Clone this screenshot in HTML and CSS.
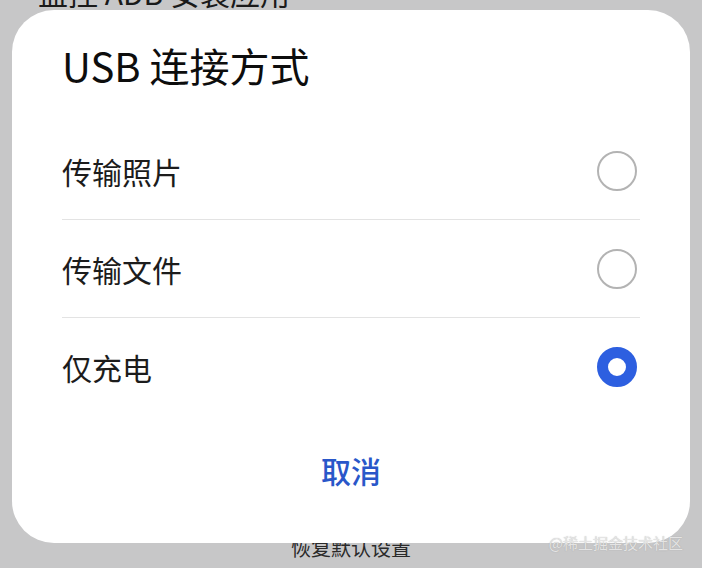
FILE: index.html
```html
<!DOCTYPE html>
<html lang="zh-CN">
<head>
  <meta charset="UTF-8" />
  <meta name="viewport" content="width=device-width, initial-scale=1.0"/>
  <title>USB 连接方式</title>
  <link rel="stylesheet" href="styles.css">
</head>
<body>

  <div class="screen">
    <div class="backdrop">
      <p class="behind-top">监控 ADB 安装应用</p>
      <p class="behind-bottom">恢复默认设置</p>
    </div>

    <div class="dialog">
      <h1 class="dialog-title">USB 连接方式</h1>

      <div class="options">
        <label class="option">
          <span class="option-text">传输照片</span>
          <span class="radio"></span>
        </label>
        <label class="option">
          <span class="option-text">传输文件</span>
          <span class="radio"></span>
        </label>
        <label class="option">
          <span class="option-text">仅充电</span>
          <span class="radio checked"></span>
        </label>
      </div>

      <button class="cancel">取消</button>
    </div>

    <span class="watermark">@稀土掘金技术社区</span>
  </div>

</body>
</html>
```

FILE: styles.css
```css
body {
  margin: 0;
  background: #c7c7c8;
  font-family: "Noto Sans CJK SC", "Noto Sans", sans-serif;
}

.screen {
  position: relative;
  width: 702px;
  height: 568px;
  overflow: hidden;
}

.backdrop {
  height: 100%;
  display: flex;
  flex-direction: column;
  justify-content: space-between;
  box-sizing: border-box;
  padding-bottom: 10px;
}

.behind-top {
  margin: -23px 0 0 38px;
  font-size: 30px;
  line-height: 30px;
  color: #1a1a1a;
}

.behind-bottom {
  margin: 0;
  text-align: center;
  font-size: 20px;
  line-height: 20px;
  color: #2a2a2a;
}

.dialog {
  position: absolute;
  left: 12px;
  top: 10px;
  width: 678px;
  height: 533px;
  box-sizing: border-box;
  padding: 31px 50px 0 50px;
  background: #fff;
  border-radius: 42px;
  display: flex;
  flex-direction: column;
}

.dialog-title {
  margin: 0 0 33px;
  font-size: 40px;
  line-height: 48px;
  font-weight: 400;
  color: #0d0d0d;
}

.options {
  display: flex;
  flex-direction: column;
}

.option {
  height: 97px;
  display: flex;
  align-items: center;
  justify-content: space-between;
  border-bottom: 1px solid #e3e3e3;
}

.option:last-child {
  border-bottom: none;
}

.option-text {
  font-size: 30px;
  color: #1c1c1c;
}

.radio {
  width: 40px;
  height: 40px;
  margin-right: 3px;
  box-sizing: border-box;
  border: 2px solid #b3b3b3;
  border-radius: 50%;
}

.radio.checked {
  border: 11px solid #2d5fe0;
  background: #fff;
}

.cancel {
  align-self: center;
  margin-top: 35px;
  padding: 0;
  border: none;
  background: none;
  font-family: inherit;
  font-size: 30px;
  line-height: 40px;
  font-weight: 500;
  color: #2957c9;
}

.watermark {
  position: absolute;
  right: 19px;
  top: 533px;
  font-size: 15px;
  line-height: 20px;
  color: #e4e4e4;
  text-shadow: 0 0 1px rgba(120, 120, 120, 0.5);
}
```
